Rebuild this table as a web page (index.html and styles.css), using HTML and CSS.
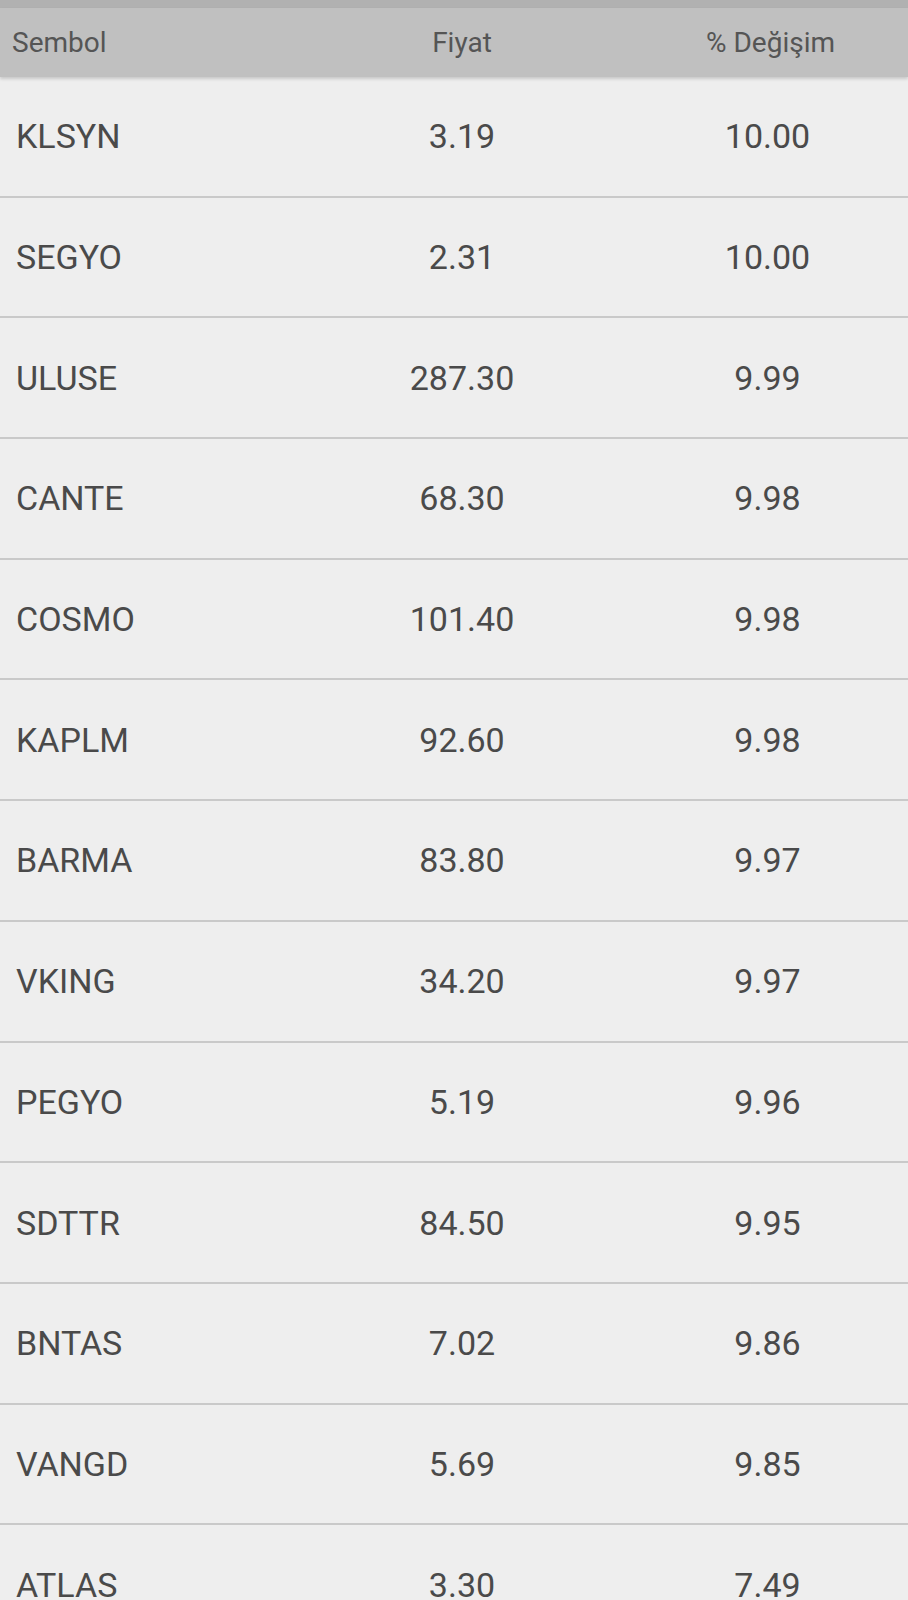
FILE: index.html
```html
<!DOCTYPE html>
<html lang="tr">
<head>
<meta charset="utf-8">
<title>Hisseler</title>
<link rel="stylesheet" href="styles.css">
</head>
<body>
<div class="screen">
  <div class="topbar"></div>
  <div class="head">
    <div class="c1">Sembol</div>
    <div class="c2">Fiyat</div>
    <div class="c3">% Değişim</div>
  </div>
  <div class="list">
    <div class="row"><div class="c1">KLSYN</div><div class="c2">3.19</div><div class="c3">10.00</div></div>
    <div class="row"><div class="c1">SEGYO</div><div class="c2">2.31</div><div class="c3">10.00</div></div>
    <div class="row"><div class="c1">ULUSE</div><div class="c2">287.30</div><div class="c3">9.99</div></div>
    <div class="row"><div class="c1">CANTE</div><div class="c2">68.30</div><div class="c3">9.98</div></div>
    <div class="row"><div class="c1">COSMO</div><div class="c2">101.40</div><div class="c3">9.98</div></div>
    <div class="row"><div class="c1">KAPLM</div><div class="c2">92.60</div><div class="c3">9.98</div></div>
    <div class="row"><div class="c1">BARMA</div><div class="c2">83.80</div><div class="c3">9.97</div></div>
    <div class="row"><div class="c1">VKING</div><div class="c2">34.20</div><div class="c3">9.97</div></div>
    <div class="row"><div class="c1">PEGYO</div><div class="c2">5.19</div><div class="c3">9.96</div></div>
    <div class="row"><div class="c1">SDTTR</div><div class="c2">84.50</div><div class="c3">9.95</div></div>
    <div class="row"><div class="c1">BNTAS</div><div class="c2">7.02</div><div class="c3">9.86</div></div>
    <div class="row"><div class="c1">VANGD</div><div class="c2">5.69</div><div class="c3">9.85</div></div>
    <div class="row"><div class="c1">ATLAS</div><div class="c2">3.30</div><div class="c3">7.49</div></div>
  </div>
</div>
</body>
</html>
```
FILE: styles.css
```css
html, body {
  margin: 0;
  padding: 0;
  background: #eeeeee;
}
body {
  font-family: Roboto, "Noto Sans", sans-serif;
  overflow: hidden;
}
.screen {
  width: 908px;
  height: 1600px;
  overflow: hidden;
  display: flex;
  flex-direction: column;
}
.topbar {
  height: 8px;
  background: #b1b1b1;
  flex: none;
}
.head {
  flex: none;
  height: 69px;
  background: #c0c0c0;
  display: grid;
  grid-template-columns: 309px 306px 1fr;
  align-items: center;
  font-size: 28px;
  color: #555555;
  position: relative;
  z-index: 2;
  box-shadow: 0 2px 3px rgba(0, 0, 0, 0.16);
}
.head .c1 { padding-left: 12px; }
.head .c2 { text-align: center; }
.head .c3 { text-align: center; padding-left: 18px; }
.list {
  display: flex;
  flex-direction: column;
}
.row {
  flex: none;
  height: 118.7px;
  border-bottom: 2px solid #c9c9c9;
  display: grid;
  grid-template-columns: 309px 306px 1fr;
  align-items: center;
  font-size: 34px;
  color: #4a4a4a;
}
.row .c1 { padding-left: 16px; }
.row .c2 { text-align: center; }
.row .c3 { text-align: center; padding-left: 12px; }
```
